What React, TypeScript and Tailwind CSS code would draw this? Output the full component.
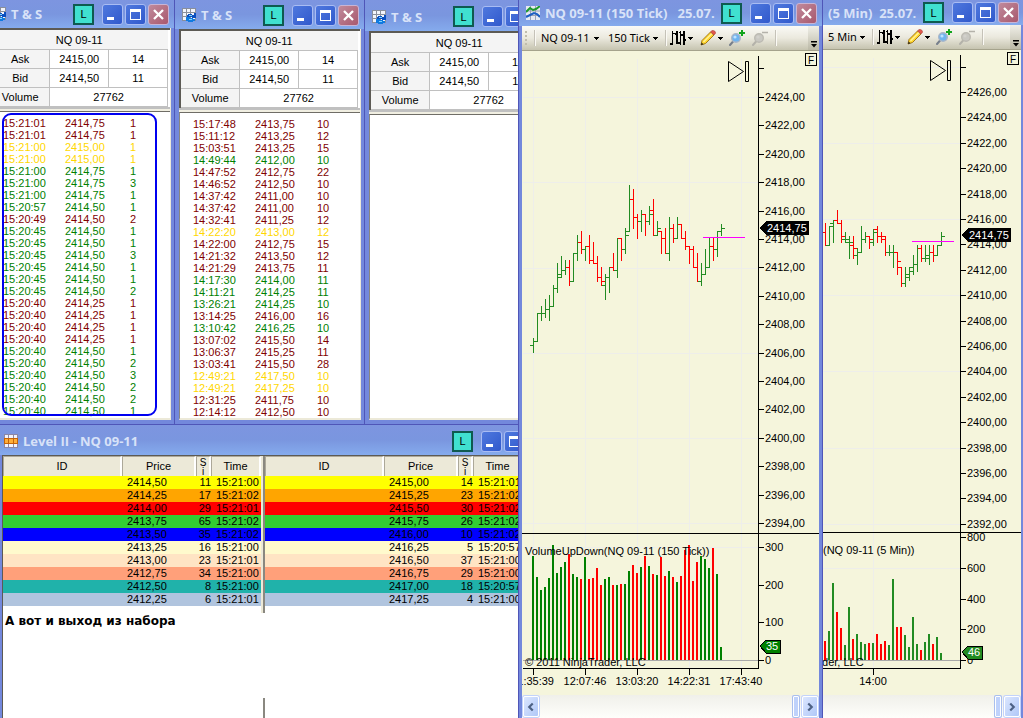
import type { ReactNode } from "react";
import clsx from "clsx";

type Tone = "down" | "up" | "flat";
type Trade = [time: string, price: string, size: number, tone: Tone];

// open, high, low, close (in 0,25 ticks above the chart's base price), volume bar height
type Bar = [o: number, h: number, l: number, c: number, v: number];

const toneClass: Record<Tone, string> = {
  down: "text-[#800000]",
  up: "text-[#008000]",
  flat: "text-[#ffd700]",
};

const allTrades: Trade[] = [
  ["15:21:01", "2414,75", 1, "down"],
  ["15:21:01", "2414,75", 1, "down"],
  ["15:21:00", "2415,00", 1, "flat"],
  ["15:21:00", "2415,00", 1, "flat"],
  ["15:21:00", "2414,75", 1, "up"],
  ["15:21:00", "2414,75", 3, "up"],
  ["15:21:00", "2414,75", 1, "up"],
  ["15:20:57", "2414,50", 1, "up"],
  ["15:20:49", "2414,50", 2, "down"],
  ["15:20:45", "2414,50", 1, "up"],
  ["15:20:45", "2414,50", 1, "up"],
  ["15:20:45", "2414,50", 3, "up"],
  ["15:20:45", "2414,50", 1, "up"],
  ["15:20:45", "2414,50", 1, "up"],
  ["15:20:45", "2414,50", 2, "up"],
  ["15:20:40", "2414,25", 1, "down"],
  ["15:20:40", "2414,25", 1, "down"],
  ["15:20:40", "2414,25", 1, "down"],
  ["15:20:40", "2414,25", 1, "down"],
  ["15:20:40", "2414,50", 1, "up"],
  ["15:20:40", "2414,50", 2, "up"],
  ["15:20:40", "2414,50", 3, "up"],
  ["15:20:40", "2414,50", 2, "up"],
  ["15:20:40", "2414,50", 2, "up"],
  ["15:20:40", "2414,50", 1, "up"],
];

const bigTrades: Trade[] = [
  ["15:17:48", "2413,75", 10, "down"],
  ["15:11:12", "2413,25", 12, "down"],
  ["15:03:51", "2413,25", 15, "down"],
  ["14:49:44", "2412,00", 10, "up"],
  ["14:47:52", "2412,75", 22, "down"],
  ["14:46:52", "2412,50", 10, "down"],
  ["14:37:42", "2411,00", 10, "down"],
  ["14:37:42", "2411,00", 10, "down"],
  ["14:32:41", "2411,25", 12, "down"],
  ["14:22:20", "2413,00", 12, "flat"],
  ["14:22:00", "2412,75", 15, "down"],
  ["14:21:32", "2413,50", 12, "down"],
  ["14:21:29", "2413,75", 11, "down"],
  ["14:17:30", "2414,00", 11, "up"],
  ["14:11:21", "2414,25", 11, "up"],
  ["13:26:21", "2414,25", 10, "up"],
  ["13:14:25", "2416,00", 16, "down"],
  ["13:10:42", "2416,25", 10, "up"],
  ["13:07:02", "2415,50", 14, "down"],
  ["13:06:37", "2415,25", 11, "down"],
  ["13:03:41", "2415,50", 28, "down"],
  ["12:49:21", "2417,50", 10, "flat"],
  ["12:49:21", "2417,25", 10, "flat"],
  ["12:31:25", "2411,75", 10, "down"],
  ["12:14:12", "2412,50", 10, "down"],
];

const depthColors = [
  "bg-[#ffff00]",
  "bg-[#ffa500]",
  "bg-[#ff0000]",
  "bg-[#32cd32]",
  "bg-[#0000ff]",
  "bg-[#fffacd]",
  "bg-[#ffe4c4]",
  "bg-[#ffa07a]",
  "bg-[#20b2aa]",
  "bg-[#b0c4de]",
];

const bids: [string, number, string][] = [
  ["2414,50", 11, "15:21:00"],
  ["2414,25", 17, "15:21:02"],
  ["2414,00", 29, "15:21:01"],
  ["2413,75", 65, "15:21:02"],
  ["2413,50", 35, "15:21:02"],
  ["2413,25", 16, "15:21:00"],
  ["2413,00", 23, "15:21:01"],
  ["2412,75", 34, "15:21:00"],
  ["2412,50", 8, "15:21:00"],
  ["2412,25", 6, "15:21:01"],
];

const asks: [string, number, string][] = [
  ["2415,00", 14, "15:21:01"],
  ["2415,25", 23, "15:21:02"],
  ["2415,50", 30, "15:21:02"],
  ["2415,75", 26, "15:21:02"],
  ["2416,00", 10, "15:21:02"],
  ["2416,25", 5, "15:20:57"],
  ["2416,50", 37, "15:21:00"],
  ["2416,75", 29, "15:21:00"],
  ["2417,00", 18, "15:20:57"],
  ["2417,25", 4, "15:21:00"],
];

const tickBars: Bar[] = [
  [2, 4, 0, 3, 104], [3, 11, 3, 11, 83], [11, 13, 9, 11, 70], [11, 15, 10, 12, 73],
  [12, 16, 9, 13, 82], [13, 19, 13, 18, 115], [18, 25, 17, 22, 87], [21, 27, 21, 23, 93],
  [23, 26, 22, 24, 98], [24, 26, 19, 20, 106], [20, 28, 20, 28, 86], [28, 33, 26, 31, 83],
  [31, 34, 28, 29, 81], [29, 30, 26, 30, 103], [30, 33, 25, 26, 81], [26, 31, 25, 25, 82],
  [25, 27, 20, 21, 92], [21, 24, 19, 20, 75], [19, 22, 15, 21, 81], [21, 24, 17, 24, 83],
  [24, 28, 23, 23, 75], [23, 32, 21, 32, 75], [32, 32, 26, 29, 76], [29, 35, 28, 33, 76],
  [34, 47, 34, 43, 89], [43, 46, 35, 38, 95], [38, 39, 32, 37, 87], [37, 40, 34, 39, 93],
  [39, 39, 33, 37, 104], [37, 41, 36, 39, 94], [40, 43, 33, 33, 86], [33, 37, 33, 35, 85],
  [34, 34, 28, 32, 103], [32, 35, 28, 28, 84], [28, 38, 26, 35, 89], [35, 36, 31, 32, 83],
  [32, 38, 32, 36, 78], [36, 36, 32, 32, 84], [32, 34, 29, 30, 110], [30, 30, 25, 29, 115],
  [29, 30, 24, 24, 79], [24, 28, 20, 20, 98], [20, 25, 19, 22, 104], [22, 29, 22, 24, 101],
  [24, 32, 24, 30, 92], [30, 32, 26, 29, 112], [29, 34, 27, 34, 86], [34, 36, 33, 35, 13],
];

const minuteBars: Bar[] = [
  [20, 23, 16, 16, 19], [16, 22, 16, 22, 29], [23, 24, 17, 24, 77], [24, 27, 23, 23, 48],
  [23, 24, 17, 19, 32], [18, 20, 17, 18, 15], [17, 19, 12, 17, 53], [16, 19, 12, 15, 21],
  [13, 15, 10, 14, 26], [14, 22, 14, 18, 18], [18, 20, 17, 19, 16], [19, 19, 15, 18, 17],
  [17, 21, 16, 20, 17], [21, 22, 17, 19, 26], [19, 20, 17, 18, 16], [19, 19, 13, 14, 19],
  [14, 16, 13, 14, 15], [14, 16, 9, 14, 81], [14, 14, 7, 11, 33], [9, 9, 3, 4, 33],
  [4, 9, 3, 7, 25], [6, 9, 5, 8, 13], [9, 13, 7, 10, 43], [10, 16, 8, 15, 16],
  [15, 16, 11, 12, 10], [12, 16, 11, 13, 18], [12, 16, 10, 14, 26], [14, 16, 11, 13, 16],
  [13, 16, 13, 16, 23], [16, 20, 16, 19, 7],
];

/* ---------- icons ---------- */

function GridArrowsIcon() {
  return (
    <svg className="h-[14px] w-[14px] shrink-0" viewBox="0 0 14 14" shapeRendering="crispEdges" aria-hidden="true">
      <rect width="14" height="13" fill="#8a8f9c" />
      {[1, 5, 9].map((x) =>
        [1, 5, 9].map((y) => <rect key={`${x}-${y}`} x={x} y={y} width={x === 9 ? 4 : 3} height="3" fill="#f2f4fb" />)
      )}
      <path d="M6 6h4v1h2V5h2v5h-4V9H7v1H5V7h1z" fill="#0a4fc0" />
      <path d="M4 9h4v1h3v1h2v2h-2v1H6v-1H4z" fill="#0f7ae0" />
      <path d="M7 7h3v1H7zM7 11h3v1H7z" fill="#7fd4ff" />
    </svg>
  );
}

function DepthIcon() {
  return (
    <svg className="h-[14px] w-[14px] shrink-0" viewBox="0 0 14 14" shapeRendering="crispEdges" aria-hidden="true">
      <rect width="14" height="14" fill="#8d87a5" />
      <path d="M1 1h3v3H1zM5 1h4v3H5zM10 1h3v3h-3zM1 10h3v3H1zM5 10h4v3H5zM10 10h3v3h-3z" fill="#f4f4fc" />
      <rect y="4" width="14" height="6" fill="#c4640a" />
      <path d="M1 5h3v4H1zM5 5h4v4H5zM10 5h3v4h-3z" fill="#ffae38" />
    </svg>
  );
}

function ChartIcon() {
  return (
    <svg className="h-[14px] w-[14px] shrink-0" viewBox="0 0 14 14" aria-hidden="true">
      <rect width="14" height="14" fill="#e6e9f2" />
      <path d="M0 5h14M0 9.500h14M4.500 0v14M9.500 0v14" stroke="#9aa2b8" strokeWidth="1" />
      <path d="M0 6l4-4 3 2 3-1 4-3" fill="none" stroke="#1c9a2c" strokeWidth="2" />
      <path d="M0 11l4-2 4-2 3 1 3 3" fill="none" stroke="#1c5fc4" strokeWidth="2" />
    </svg>
  );
}

function BarsIcon() {
  return (
    <svg className="h-4 w-4 shrink-0" viewBox="0 0 16 16" shapeRendering="crispEdges" aria-hidden="true">
      <path d="M2 1h1v14H2zM0 13h2v2H0zM3 3h2v1H3zM6 1h2v13H6zM5 3h1v2H5zM8 12h2v2H8zM10 1h1v14h-1zM9 2h1v1H9zM13 1h2v14h-2zM11 4h2v2h-2zM15 9h1v2h-1z" fill="#000" />
    </svg>
  );
}

function PencilIcon() {
  return (
    <svg className="h-4 w-4 shrink-0" viewBox="0 0 16 16" aria-hidden="true">
      <path d="M1 15l1-4.500L10.500 2l3.500 3L5.500 13.500z" fill="#ffd72e" stroke="#9a6d10" strokeWidth="0.900" />
      <path d="M3.500 12L12 3.500" stroke="#fff3a0" strokeWidth="1.200" />
      <path d="M10.500 2L12 .6Q13.500 0 14.800 1.200T15.200 3.800L14 5z" fill="#e2574c" stroke="#a8433c" strokeWidth="0.600" />
      <path d="M1 15l.6-2.500L3.500 14.300z" fill="#222" />
    </svg>
  );
}

function ZoomIcon({ out = false }: { out?: boolean }) {
  return (
    <svg className="h-4 w-4 shrink-0" viewBox="0 0 16 16" aria-hidden="true">
      <path d="M1 15l3.500-4" stroke={out ? "#b4b2aa" : "#777f8c"} strokeWidth="2" strokeLinecap="round" />
      <circle cx="7" cy="8" r="4.300" fill={out ? "#c9c8c2" : "#6fb4ee"} stroke={out ? "#bcbab2" : "#a9b6c8"} strokeWidth="1.400" />
      <circle cx="6" cy="7" r="1.600" fill={out ? "#d2d1cb" : "#bfe2ff"} />
      {out ? (
        <path d="M10 2.500h6" stroke="#b4b2aa" strokeWidth="1.500" />
      ) : (
        <path d="M10 3h6M13 0v6" stroke="#12a41c" strokeWidth="2" />
      )}
    </svg>
  );
}

function Caret() {
  return (
    <svg className="pointer-events-none h-[3px] w-[5px] shrink-0" viewBox="0 0 5 3" shapeRendering="crispEdges" aria-hidden="true">
      <path d="M0 0h5v1H0zM1 1h3v1H1zM2 2h1v1H2z" fill="#000" />
    </svg>
  );
}

function ArrowGlyph({ d }: { d: string }) {
  return (
    <svg className="h-[14px] w-[14px]" viewBox="0 0 14 16" aria-hidden="true">
      <path d={d} fill="none" stroke="#4d6185" strokeWidth="2.500" />
    </svg>
  );
}

/* ---------- window chrome ---------- */

function WindowButton({ kind }: { kind: "Minimize" | "Maximize" | "Close" }) {
  return (
    <button
      type="button"
      aria-label={kind}
      className={clsx(
        "h-[21px] w-[21px] shrink-0 rounded-[3px] border",
        kind === "Close"
          ? "border-[#c9b4d4] bg-gradient-to-br from-[#c08a9c] to-[#a8586e]"
          : "border-[#a9bcf3] bg-gradient-to-br from-[#4f78de] to-[#3159cc]"
      )}
    >
      <svg className="h-[19px] w-[19px]" viewBox="0 0 19 19" aria-hidden="true">
        {kind === "Minimize" && <path d="M4 12h7v3H4z" fill="#fff" />}
        {kind === "Maximize" && <path d="M4 4h11v11H4zM5 7v7h9V7z" fill="#fff" fillRule="evenodd" />}
        {kind === "Close" && <path d="M5 5l9 9M14 5l-9 9" stroke="#fff" strokeWidth="2.300" />}
      </svg>
    </button>
  );
}

function TitleBar({ icon, title, className }: { icon?: ReactNode; title: string; className: string }) {
  return (
    <header
      className={clsx(
        "flex shrink-0 items-center bg-gradient-to-b from-[#7d95e0] via-[#7a96df] to-[#85abed]",
        className
      )}
    >
      {icon}
      <h2 className="min-w-0 flex-1 overflow-hidden pl-[5px] font-['Open_Sans',sans-serif] text-[13px] leading-4 font-bold whitespace-pre text-[#d8e2f8]">
        {title}
      </h2>
      <button
        type="button"
        aria-label="Link"
        className="mr-2 h-[21px] w-[21px] shrink-0 border-2 border-[#0f5a50] bg-[#40e0d0] text-[11px] leading-4 text-black"
      >
        L
      </button>
      <div className="flex gap-[2px]">
        <WindowButton kind="Minimize" />
        <WindowButton kind="Maximize" />
        <WindowButton kind="Close" />
      </div>
    </header>
  );
}

/* ---------- time & sales ---------- */

function TimeAndSales({ trades, titleClass, marked = false }: { trades: Trade[]; titleClass: string; marked?: boolean }) {
  const label = "w-[57px] border-r border-b border-[#c0c0c0] bg-[#f4f4f4] font-normal";
  const value = "border-r border-b border-[#c0c0c0] bg-white";

  return (
    <section className="flex w-full min-w-[190px] shrink-0 flex-col border-r border-[#4f56b8] bg-[#7388dc] pb-1">
      <TitleBar icon={<GridArrowsIcon />} title="T & S" className={clsx("pr-[5px] pl-[7px]", titleClass)} />
      <div className="mr-[3px] ml-1 flex min-h-0 flex-1 flex-col border-r border-[#ece9d8] bg-white">
        <div className="border-t-2 border-l-2 border-[#5c5a54] pr-[2px]">
          <table className="w-full table-fixed border-collapse text-center text-[11px] leading-[18px]">
            <tbody>
              <tr className="h-[19px]">
                <th colSpan={3} className="border-b border-[#c0c0c0] bg-[#f4f4f4] pt-px font-normal">NQ 09-11</th>
              </tr>
              <tr className="h-[19px]">
                <th scope="row" className={label}>Ask</th>
                <td className={value}>2415,00</td>
                <td className={value}>14</td>
              </tr>
              <tr className="h-[19px]">
                <th scope="row" className={label}>Bid</th>
                <td className={value}>2414,50</td>
                <td className={value}>11</td>
              </tr>
              <tr className="h-[19px]">
                <th scope="row" className={label}>Volume</th>
                <td colSpan={2} className={value}>27762</td>
              </tr>
            </tbody>
          </table>
        </div>
        <div className="h-1 border-b-2 border-[#f1efe2] bg-[#c0c0c0]" />
        <div className="relative min-h-0 flex-1 overflow-hidden border-t border-b-2 border-l border-t-[#6f6d66] border-b-[#ece9d8] border-l-[#8a8880] pt-[5px] pl-[13px]">
          <table className="text-[11px] leading-3">
            <tbody>
              {trades.map(([time, price, size, tone], i) => (
                <tr key={i} className={toneClass[tone]}>
                  <td className="w-[62px]">{time}</td>
                  <td className="w-[58px]">{price}</td>
                  <td className="w-5 text-center">{size}</td>
                </tr>
              ))}
            </tbody>
          </table>
          {marked && (
            <div className="absolute top-px bottom-[2px] left-3 w-[155px] rounded-[9px] border-2 border-[#0000f0]" />
          )}
        </div>
      </div>
    </section>
  );
}

/* ---------- level II ---------- */

function DepthTable({ rows, label }: { rows: [string, number, string][]; label: string }) {
  const head = "h-5 overflow-hidden border-t border-r-2 border-l border-t-[#aca899] border-r-white border-l-[#aca899] bg-[#ece9d8] p-0 font-normal";

  return (
    <table aria-label={label} className="w-full min-w-[258px] table-fixed border-separate border-spacing-0 text-[11px] leading-[13px]">
      <thead>
        <tr>
          <th className={head}>ID</th>
          <th className={clsx(head, "w-[74px]")}>Price</th>
          <th className={clsx(head, "w-[15px]")}>
            <span className="block text-[10px] leading-[9px]">S<br />i</span>
          </th>
          <th className={clsx(head, "w-[50px]")}>Time</th>
        </tr>
      </thead>
      <tbody>
        {rows.map(([price, size, time], i) => (
          <tr key={price} className={depthColors[i]}>
            <td />
            <td className="pl-[5px]">{price}</td>
            <td className="text-right">{size}</td>
            <td className="pl-[5px]">{time}</td>
          </tr>
        ))}
      </tbody>
    </table>
  );
}

function LevelTwo() {
  return (
    <section className="flex min-h-0 flex-1 flex-col overflow-hidden border-t border-[#4f56b8] bg-white">
      <div className="-mr-[38px] flex flex-col">
        <TitleBar icon={<DepthIcon />} title="Level II - NQ 09-11" className="h-[30px] pt-[2px] pr-2 pl-1" />
      </div>
      <div className="flex min-h-0 flex-1 flex-col border-l-2 border-[#7388dc]">
        <div className="flex flex-1 flex-col border-t border-l border-[#5c5a54]">
          <div className="flex h-[157px]">
            <div className="min-w-0 flex-[258] overflow-hidden">
              <DepthTable rows={bids} label="Bids" />
            </div>
            <div className="w-1 border-r-2 border-[#8a8880] bg-[#ece9d8]" />
            <div className="min-w-0 flex-[253] overflow-hidden">
              <DepthTable rows={asks} label="Asks" />
            </div>
          </div>
          <p className="pl-[2px] font-['DejaVu_Sans',sans-serif] text-[12px] leading-4 font-bold">А вот и выход из набора</p>
          <div className="mt-auto flex h-5">
            <div className="flex-[258]" />
            <div className="w-1 border-r-2 border-[#8a8880]" />
            <div className="flex-[253]" />
          </div>
        </div>
      </div>
    </section>
  );
}

/* ---------- charts ---------- */

function ToolSelect({ label, value, className }: { label: string; value: string; className: string }) {
  return (
    <label className="flex shrink-0 items-center">
      <span className="sr-only">{label}</span>
      <select
        defaultValue={value}
        className={clsx("appearance-none bg-transparent font-['Noto_Sans',sans-serif] text-[11px] leading-4 outline-none", className)}
      >
        <option>{value}</option>
      </select>
      <Caret />
    </label>
  );
}

function Toolbar({ instrument, interval }: { instrument?: string; interval: string }) {
  const separator = "h-4 w-px shrink-0 bg-[#fbfaf5] shadow-[-1px_0_0_#c5c2b8]";

  return (
    <div className="flex h-[25px] shrink-0 items-center overflow-hidden border-b border-[#a5a38c] bg-gradient-to-b from-[#fafaf6] via-[#ebe9de] to-[#c6c4b0]">
      {instrument && (
        <>
          <div className="ml-[3px] flex flex-col gap-[2px]">
            {[0, 1, 2, 3].map((n) => <div key={n} className="h-[2px] w-[2px] bg-[#c0bdac]" />)}
          </div>
          <div className={clsx(separator, "ml-2")} />
          <ToolSelect label="Instrument" value={instrument} className="ml-[5px] w-[53px]" />
          <div className="w-[9px] shrink-0" />
        </>
      )}
      <ToolSelect label="Interval" value={interval} className={instrument ? "w-[45px]" : "ml-[5px] w-[32px]"} />
      <div className={clsx(separator, "ml-2")} />
      <button type="button" aria-label="Chart style" className="ml-[3px] flex shrink-0 items-center gap-[2px]">
        <BarsIcon />
        <Caret />
      </button>
      <button type="button" aria-label="Draw" className="ml-[7px] flex shrink-0 items-center gap-[2px]">
        <PencilIcon />
        <Caret />
      </button>
      <button type="button" aria-label="Zoom in" className="ml-[6px] shrink-0">
        <ZoomIcon />
      </button>
      <button type="button" aria-label="Zoom out" disabled className="ml-[7px] shrink-0">
        <ZoomIcon out />
      </button>
      <div className={clsx(separator, "ml-2")} />
      <button
        type="button"
        aria-label="More tools"
        className="ml-auto flex h-[25px] w-[11px] shrink-0 items-end justify-center bg-gradient-to-b from-[#f0efe8] to-[#b9b7a4] pb-[3px]"
      >
        <svg className="h-[7px] w-[6px]" viewBox="0 0 6 7" aria-hidden="true">
          <path d="M0 0h6v1.500H0zM0 3h6L3 6.500z" fill="#000" />
        </svg>
      </button>
    </div>
  );
}

function ScrollBar({ showLeft = false }: { showLeft?: boolean }) {
  const arrow = "h-[21px] w-4 shrink-0 rounded-[2px] border border-white bg-gradient-to-br from-[#dbe6fe] to-[#b0c8f8] shadow-[0_0_0_1px_#c3d3fb]";

  return (
    <div className="flex h-[23px] shrink-0 items-center gap-[3px] bg-gradient-to-b from-[#f0f0ea] to-[#fefefb] px-px">
      {showLeft && (
        <button type="button" aria-label="Scroll left" className={arrow}>
          <ArrowGlyph d="M9 4L5 8l4 4" />
        </button>
      )}
      <div className="ml-auto h-[21px] w-[6px] rounded-[1px] border border-white bg-[#bfd2fb] shadow-[0_0_0_1px_#a9bfee]" />
      <button type="button" aria-label="Scroll right" className={arrow}>
        <ArrowGlyph d="M5 4l4 4-4 4" />
      </button>
    </div>
  );
}

type PlotProps = {
  bars: Bar[];
  view: string;
  left: number;
  axis: number;
  top: number;
  split: number;
  firstX: number;
  baseY: number;
  tick: number;
  prices: { value: number; y: number }[];
  gridY: number[];
  volumes: [number, number][];
  times: [string, number][];
  lastY: number;
  line: { x: number; y: number };
  volume: { value: number; y: number; color: string };
  title: string;
  titleX: number;
  footX: number;
};

function Plot(p: PlotProps) {
  const right = p.axis + 62;
  const color = (b: Bar, up: string) => (b[3] >= b[0] ? up : "#ff0000");
  const y = (n: number) => Math.round(p.baseY - n * p.tick);

  return (
    <svg
      viewBox={p.view}
      className="block h-auto w-full bg-[#f5f5dc] font-['Liberation_Sans',Arial,sans-serif] text-[11px]"
      shapeRendering="crispEdges"
      role="img"
      aria-label={p.title}
    >
      {/* grid */}
      {p.gridY.map((g) => <rect key={g} x={p.left} y={g} width={p.axis - p.left} height="1" fill="#eeeeea" />)}
      {p.times.map(([t, x]) => <rect key={t} x={x} y={p.top + 3} width="1" height={665 - p.top} fill="#eeeeea" />)}

      {/* volume */}
      {p.bars.map((b, i) => (
        <rect key={i} x={p.firstX + i * 4 - 1} y={660 - b[4]} width="2" height={b[4]} fill={color(b, p.volume.color)} />
      ))}
      <rect x={p.left} y="660" width={p.axis - p.left} height="1" fill="#a9a9a9" />

      {/* price bars */}
      {p.bars.map((b, i) => {
        const x = p.firstX + i * 4;
        return (
          <g key={i} fill={color(b, "#228b22")}>
            <rect x={x} y={y(b[1])} width="1" height={y(b[2]) - y(b[1]) + 1} />
            <rect x={x - 3} y={y(b[0])} width="3" height="1" />
            <rect x={x + 1} y={y(b[3])} width="3" height="1" />
          </g>
        );
      })}
      <rect x={p.line.x} y={p.line.y} width="42" height="1" fill="#ff00ff" />

      {/* axes */}
      <rect x={p.axis} y={p.top} width="1" height={669 - p.top} />
      <rect x={p.left} y="668" width={p.axis - p.left} height="1" />
      <rect x={p.left - 1} y={p.split} width={right - p.left + 1} height="1" />
      <rect x={p.axis} y={p.top + 12} width="6" height="1" />
      {p.prices.map(({ value, y: py }) => (
        <g key={value}>
          <rect x={p.axis} y={py} width="6" height="1" />
          <text x={p.axis + 7} y={py + 4}>{`${value},00`}</text>
        </g>
      ))}
      {p.volumes.map(([value, vy]) => (
        <g key={value}>
          <rect x={p.axis} y={vy} width="6" height="1" />
          <text x={p.axis + 7} y={vy + 4}>{value}</text>
        </g>
      ))}
      {p.times.map(([t, x]) => (
        <g key={t}>
          <rect x={x} y="669" width="1" height="6" />
          <text x={x} y="685" textAnchor="middle">{t}</text>
        </g>
      ))}

      {/* last price and last volume */}
      <path d={`M${p.axis + 2} ${p.lastY}l6-7h43v14h-43z`} fill="#000" />
      <text x={p.axis + 9} y={p.lastY + 4} fill="#fff">2414,75</text>
      <path d={`M${p.axis + 2} ${p.volume.y}l6-6h14v13h-14z`} fill={p.volume.color} stroke="#000" />
      <text x={p.axis + 8} y={p.volume.y + 4} fill="#fff">{p.volume.value}</text>

      <text x={p.titleX} y={p.split + 22}>{p.title}</text>
      <text x={p.footX} y="666">© 2011 NinjaTrader, LLC</text>

      {/* jump to last bar, fixed-scale box */}
      <path d={`M${p.axis - 29.5} ${p.top + 5.5}v20l15-10zM${p.axis - 12.5} ${p.top + 5.5}h3v20h-3z`} fill="none" stroke="#000" shapeRendering="auto" />
      <rect x={p.axis + 47.5} y={p.top - 2.5} width="11" height="12" fill="none" stroke="#000" />
      <text x={p.axis + 53} y={p.top + 8} textAnchor="middle" fontSize="10">F</text>
    </svg>
  );
}

const tickPrices = Array.from({ length: 16 }, (_, i) => ({ value: 2424 - i * 2, y: Math.round(97 + i * 28.4) }));
const minutePrices = Array.from({ length: 18 }, (_, i) => ({ value: 2426 - i * 2, y: Math.round(92 + i * 25.4) }));

export default function App() {
  return (
    <main className="grid min-h-screen grid-cols-[minmax(0,518fr)_minmax(0,304fr)_minmax(0,201fr)] overflow-hidden bg-[#f5f5dc] font-['Liberation_Sans',Arial,sans-serif] text-black">
      <div className="flex min-w-0 flex-col">
        <div className="grid h-[424px] shrink-0 grid-cols-[175fr_190fr_153fr] bg-[#7388dc]">
          <div className="flex min-w-0 justify-end overflow-hidden">
            <TimeAndSales trades={allTrades} titleClass="h-7" marked />
          </div>
          <div className="flex min-w-0 overflow-hidden">
            <TimeAndSales trades={bigTrades} titleClass="h-[29px] pt-px" />
          </div>
          <div className="flex min-w-0 overflow-hidden">
            <TimeAndSales trades={[]} titleClass="h-[31px] pt-[2px]" />
          </div>
        </div>
        <LevelTwo />
      </div>

      <div className="flex min-w-0 border-l border-[#4f56b8]">
        <section className="flex min-w-0 flex-1 flex-col bg-[#7388dc]">
          <TitleBar icon={<ChartIcon />} title="NQ 09-11 (150 Tick)   25.07." className="h-[26px] pr-[5px] pl-[7px]" />
          <div className="mx-[3px] flex flex-1 flex-col bg-[#f5f5dc]">
            <Toolbar instrument="NQ 09-11" interval="150 Tick" />
            <Plot
              bars={tickBars}
              view="522 51 297 644"
              left={523}
              axis={758}
              top={56}
              split={533}
              firstX={533}
              baseY={352}
              tick={3.55}
              prices={tickPrices}
              gridY={[97, 182, 268, 353, 438, 523, 547]}
              volumes={[[300, 547], [200, 585], [100, 622], [0, 660]]}
              times={[["11:35:39", 533], ["12:07:46", 585], ["13:03:20", 637], ["14:22:31", 689], ["17:43:40", 741]]}
              lastY={228}
              line={{ x: 703, y: 237 }}
              volume={{ value: 35, y: 646, color: "#008000" }}
              title="VolumeUpDown(NQ 09-11 (150 Tick))"
              titleX={525}
              footX={525}
            />
            <ScrollBar showLeft />
          </div>
        </section>
      </div>

      <div className="flex min-w-0 border-l border-[#4f56b8]">
        <section className="flex min-w-0 flex-1 flex-col bg-[#7388dc]">
          <TitleBar title="(5 Min)  25.07." className="h-[25px] pr-1" />
          <div className="mr-[2px] flex flex-1 flex-col bg-[#f5f5dc]">
            <Toolbar interval="5 Min" />
            <Plot
              bars={minuteBars}
              view="823 50 198 645"
              left={823}
              axis={960}
              top={55}
              split={532}
              firstX={825}
              baseY={296}
              tick={3.176}
              prices={minutePrices}
              gridY={[67, 143, 219, 295, 371, 448, 524, 568]}
              volumes={[[800, 537], [600, 568], [400, 599], [200, 629], [0, 660]]}
              times={[["14:00", 873]]}
              lastY={235}
              line={{ x: 912, y: 241 }}
              volume={{ value: 46, y: 652, color: "#228b22" }}
              title="(NQ 09-11 (5 Min))"
              titleX={823}
              footX={743}
            />
            <ScrollBar />
          </div>
        </section>
      </div>
    </main>
  );
}
